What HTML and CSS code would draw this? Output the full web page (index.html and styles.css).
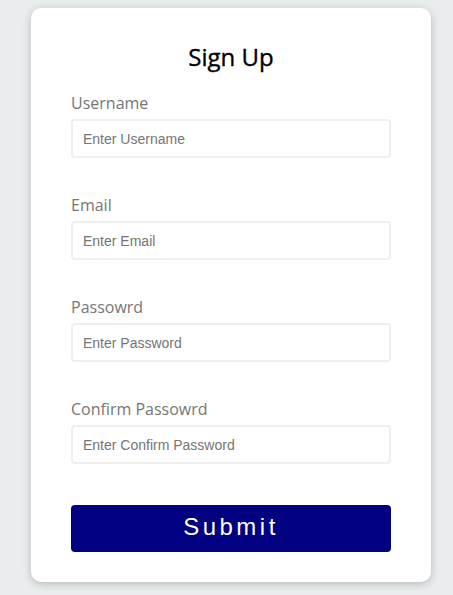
FILE: index.html
```html
<!DOCTYPE html>
<html lang="en">
<head>
<meta charset="utf-8">
<title>Sign Up</title>
<link rel="stylesheet" href="styles.css">
</head>
<body>
<form class="card">
  <h2 class="title">Sign Up</h2>
  <div class="field">
    <label class="label" for="u">Username</label>
    <input class="input" id="u" type="text" placeholder="Enter Username">
  </div>
  <div class="field">
    <label class="label" for="e">Email</label>
    <input class="input" id="e" type="text" placeholder="Enter Email">
  </div>
  <div class="field">
    <label class="label" for="p">Passowrd</label>
    <input class="input" id="p" type="text" placeholder="Enter Password">
  </div>
  <div class="field">
    <label class="label" for="c">Confirm Passowrd</label>
    <input class="input" id="c" type="text" placeholder="Enter Confirm Password">
  </div>
  <button class="submit" type="button">Submit</button>
</form>
</body>
</html>
```
FILE: styles.css
```css
html, body {
  margin: 0;
  padding: 0;
}
body {
  background: #e9eded;
  font-family: "Open Sans", sans-serif;
  padding: 8px 0 13px 31px;
}
.card {
  box-sizing: border-box;
  width: 400px;
  background: #ffffff;
  border-radius: 10px;
  box-shadow: 0 2px 8px rgba(0, 0, 0, 0.22);
  padding: 33px 40px 30px;
  display: flex;
  flex-direction: column;
}
.title {
  margin: 0 0 19px;
  font-size: 24px;
  line-height: 32px;
  font-weight: 400;
  -webkit-text-stroke: 0.35px #000;
  color: #000;
  text-align: center;
}
.field {
  display: flex;
  flex-direction: column;
  gap: 5px;
  margin-bottom: 36px;
}
.field:last-of-type {
  margin-bottom: 41px;
}
.label {
  font-size: 16px;
  line-height: 22px;
  color: #767676;
}
.input {
  box-sizing: border-box;
  width: 320px;
  height: 39px;
  margin: 0;
  border: 2px solid #efefef;
  border-radius: 4px;
  padding: 0 10px;
  font-family: "Liberation Sans", Arial, sans-serif;
  font-size: 14px;
  color: #333;
  outline: none;
}
.input::placeholder {
  color: #757575;
}
.submit {
  width: 320px;
  height: 47px;
  margin: 0;
  border: none;
  border-radius: 4px;
  background: #000080;
  color: #fff;
  font-family: "Liberation Sans", Arial, sans-serif;
  font-size: 24px;
  letter-spacing: 3.5px;
  padding: 0 0 4px;
  cursor: pointer;
}
```
